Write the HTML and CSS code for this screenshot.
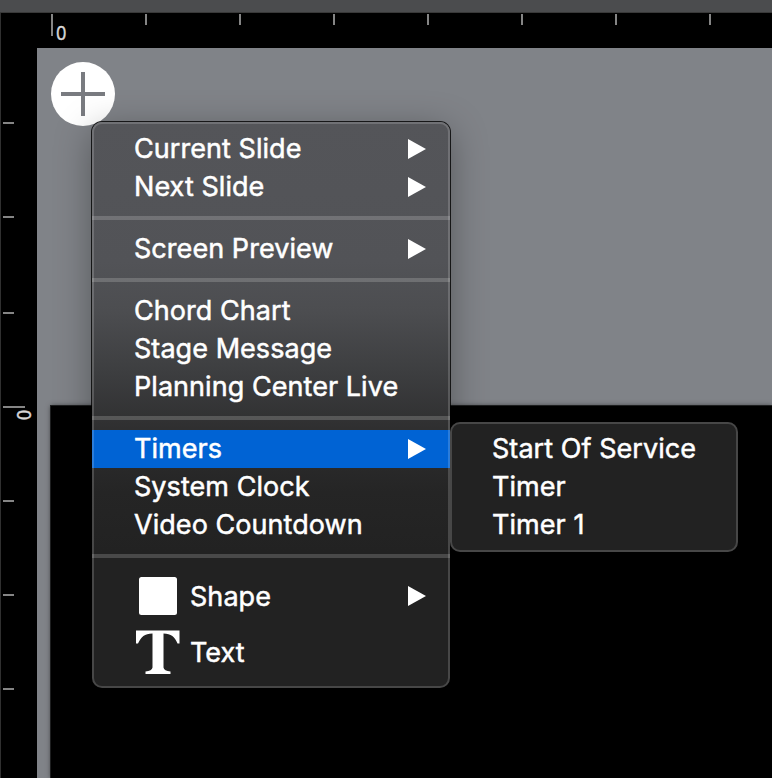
FILE: index.html
```
<!DOCTYPE html>
<html lang="en">
<head>
<meta charset="utf-8">
<title>Stage Editor</title>
<link rel="stylesheet" href="styles.css">
</head>
<body>
<div class="app">
  <div class="toolbar"></div>
  <div class="ruler-top">
    <div class="tick major"><span class="zero">0</span></div>
    <div class="tick"></div><div class="tick"></div><div class="tick"></div><div class="tick"></div><div class="tick"></div><div class="tick"></div><div class="tick"></div>
  </div>
  <div class="work">
    <div class="ruler-left">
      <div class="tick"></div><div class="tick"></div><div class="tick third"></div>
      <div class="tick major"><span class="zero">0</span></div>
      <div class="tick"></div><div class="tick"></div><div class="tick"></div>
    </div>
    <div class="canvas">
      <button class="add" aria-label="Add"><svg width="64" height="64" viewBox="0 0 64 64"><circle cx="32" cy="32" r="32" fill="#fff"/><path d="M32 10v44M10 32h44" stroke="#797b80" stroke-width="4"/></svg></button>
      <div class="stage"></div>
    </div>
  </div>
  <div class="menu main">
    <div class="item"><span>Current Slide</span><i class="arrow"></i></div>
    <div class="item"><span>Next Slide</span><i class="arrow"></i></div>
    <div class="sep"></div>
    <div class="item"><span>Screen Preview</span><i class="arrow"></i></div>
    <div class="sep"></div>
    <div class="item"><span>Chord Chart</span></div>
    <div class="item"><span>Stage Message</span></div>
    <div class="item"><span>Planning Center Live</span></div>
    <div class="sep"></div>
    <div class="item selected"><span>Timers</span><i class="arrow"></i></div>
    <div class="item"><span>System Clock</span></div>
    <div class="item"><span>Video Countdown</span></div>
    <div class="sep"></div>
    <div class="item tall"><svg class="icon" width="46" height="46" viewBox="0 0 46 46"><rect x="5" y="4" width="38" height="38" rx="2.5" fill="#fff"/></svg><span>Shape</span><i class="arrow"></i></div>
    <div class="item tall"><svg class="icon" width="46" height="46" viewBox="0 0 46 46"><path fill="#fff" d="M2 1.5H45.5V14.5H43.5C41 8 37 4.5 29.5 4.5V38.5Q30 42 36.500 42.500V45H11.500V42.500Q18 42 18.500 38.500V4.500C10.500 4.500 7 8 4 14.500H2Z"/></svg><span>Text</span></div>
  </div>
  <div class="menu sub">
    <div class="item"><span>Start Of Service</span></div>
    <div class="item"><span>Timer</span></div>
    <div class="item"><span>Timer 1</span></div>
  </div>
</div>
</body>
</html>
```
FILE: styles.css
```
* { box-sizing: border-box; }
body { margin: 0; background: #000; font-family: Inter, "Liberation Sans", sans-serif; }
.app { position: relative; width: 772px; height: 778px; overflow: hidden; display: flex; flex-direction: column; }
.toolbar { height: 13px; flex: none; background: #4b4c4e; border-bottom: 1px solid #393939; }
.ruler-top { height: 35px; flex: none; display: flex; gap: 92px; padding: 1px 0 0 50px; border-left: 1px solid #303030; }
.ruler-top .tick { width: 2px; height: 11px; flex: none; background: #858585; }
.ruler-top .tick.major { height: 22px; }
.zero { color: #d8d8d8; font-size: 18px; line-height: 18px; display: block; -webkit-text-stroke: .4px #d8d8d8; transform: scaleX(.92); }
.ruler-top .zero { margin: 11px 0 0 5px; }
.work { flex: 1; display: flex; min-height: 0; }
.ruler-left { width: 37px; flex: none; border-left: 1px solid #303030; padding: 74px 0 0 2px; display: flex; flex-direction: column; gap: 92px; }
.ruler-left .tick { width: 11px; height: 2px; flex: none; background: #858585; }
.ruler-left .third { margin-top: 2px; }
.ruler-left .tick.major { width: 22px; }
.ruler-left .zero { width: 18px; transform: rotate(90deg) scaleX(.92); text-align: center; margin-left: 11px; }
.canvas { flex: 1; display: flex; flex-direction: column; background: #808388; padding: 14px 0 0 14px; }
.add { width: 64px; height: 64px; padding: 0; border: 0; background: none; flex: none; }
.add svg { display: block; }
.stage { flex: 1; margin: 280px 0 0 0; background: #000; box-shadow: 0 0 0 1px #1e1f20, 0 0 5px rgba(0,0,0,.6); }
.menu { position: absolute; padding: 8px 0; border-radius: 10px; color: #fff; background: #222; }
.menu::after { content: ""; position: absolute; inset: 0; border: 2px solid rgba(255,255,255,.17); border-radius: 10px; pointer-events: none; }
.main { left: 92px; top: 122px; width: 358px; height: 566px; background: linear-gradient(#545559 0, #525357 140px, #4c4d50 190px, #3d3e40 250px, #2e2e2f 310px, #252525 370px, #222 430px); box-shadow: 0 0 0 1px rgba(0,0,0,.8), 0 8px 36px rgba(0,0,0,.34); }
.sub { left: 450px; top: 422px; width: 288px; height: 130px; }
.item { height: 38px; display: flex; align-items: center; padding: 0 24px 0 42px; font-size: 27px; line-height: 38px; white-space: nowrap; letter-spacing: .05px; -webkit-text-stroke: .5px #fff; }
.item span { flex: 1; }
.selected { background: #0063d4; }
.tall { height: 56px; }
.tall span { padding-top: 1px; }
.icon { margin-right: 10px; flex: none; }
.sep { height: 24px; padding: 10px 0; }
.sep::before { content: ""; display: block; height: 4px; background: rgba(255,255,255,.18); }
.arrow { width: 18px; height: 20px; background: #fff; clip-path: polygon(0 0, 100% 50%, 0 100%); }
```
